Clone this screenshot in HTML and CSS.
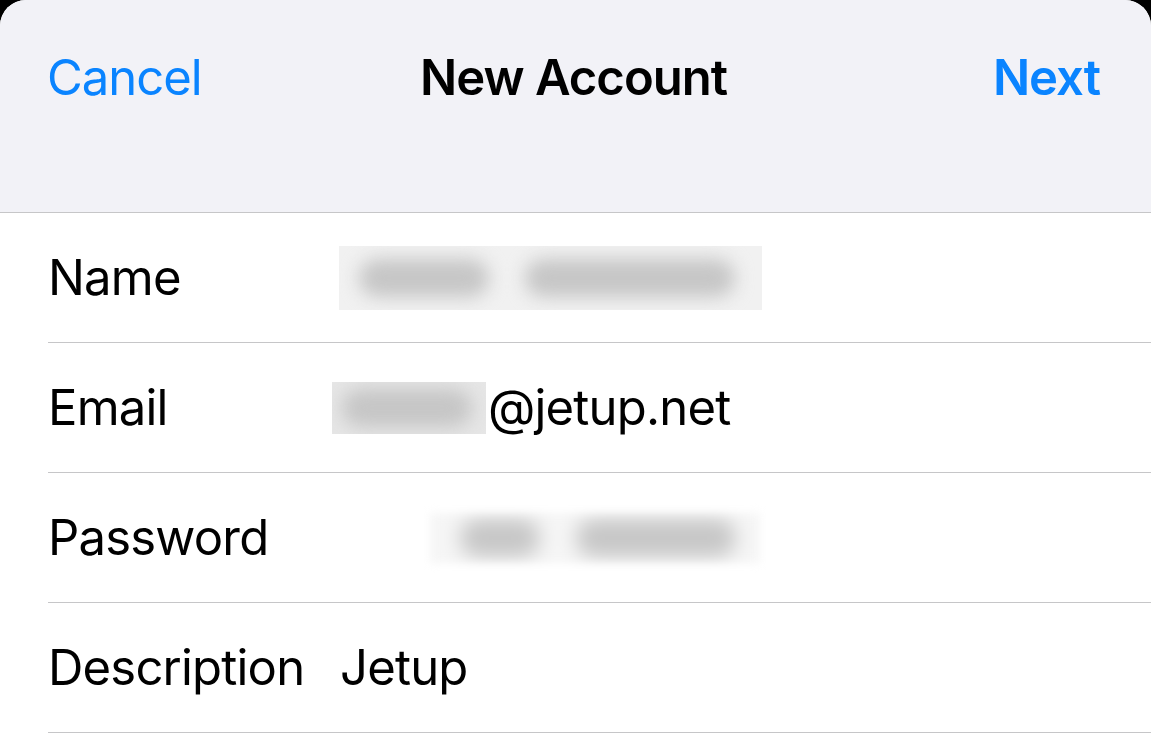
FILE: index.html
```html
<!DOCTYPE html>
<html lang="en">
<head>
    <meta charset="UTF-8">
    <meta name="viewport" content="width=device-width, initial-scale=1.0">
    <title>New Account</title>
    <link rel="stylesheet" href="styles.css">
</head>
<body>
    <div class="sheet">
        <div class="nav-bar">
            <button class="nav-btn cancel">Cancel</button>
            <div class="nav-title">New Account</div>
            <button class="nav-btn next">Next</button>
        </div>

        <div class="form-list">
            <div class="form-row">
                <span class="row-label">Name</span>
                <span class="row-value">
                    <span class="blur-box name-blur">
                        <span class="blob" style="width: 130px"></span>
                        <span class="blob" style="width: 210px"></span>
                    </span>
                </span>
            </div>
            <div class="form-row">
                <span class="row-label">Email</span>
                <span class="row-value">
                    <span class="blur-box email-blur">
                        <span class="blob" style="width: 130px"></span>
                    </span><span class="value-text">@jetup.net</span>
                </span>
            </div>
            <div class="form-row">
                <span class="row-label">Password</span>
                <span class="row-value">
                    <span class="blur-box pass-blur">
                        <span class="blob" style="width: 80px"></span>
                        <span class="blob" style="width: 160px"></span>
                    </span>
                </span>
            </div>
            <div class="form-row">
                <span class="row-label">Description</span>
                <span class="row-value"><span class="value-text">Jetup</span></span>
            </div>
        </div>
    </div>
</body>
</html>
```

FILE: styles.css
```css
* {
    margin: 0;
    padding: 0;
    box-sizing: border-box;
}

body {
    font-family: Inter, 'Noto Sans', sans-serif;
    background: #000;
    height: 100vh;
    overflow: hidden;
    color: #000;
}

.sheet {
    background: #fff;
    border-radius: 26px 26px 0 0;
    height: 100vh;
    overflow: hidden;
}

.nav-bar {
    background: #f2f2f7;
    height: 213px;
    border-bottom: 1px solid #c6c6c8;
    display: grid;
    grid-template-columns: 1fr auto 1fr;
    align-items: start;
    padding: 50px 51px 0 47px;
}

.nav-btn {
    background: none;
    border: none;
    color: #0a84ff;
    font-family: inherit;
    font-size: 49px;
    line-height: 56px;
    letter-spacing: -1px;
    cursor: pointer;
}

.nav-btn.cancel {
    justify-self: start;
}

.nav-btn.next {
    justify-self: end;
    font-weight: 600;
}

.nav-title {
    font-size: 49px;
    line-height: 56px;
    letter-spacing: -1px;
    font-weight: 600;
}

.form-list {
    padding-left: 48px;
}

.form-row {
    height: 130px;
    display: flex;
    align-items: center;
    border-bottom: 1px solid #c6c6c8;
}

.row-label {
    width: 292px;
    font-size: 49px;
    letter-spacing: -0.8px;
    flex-shrink: 0;
}

.row-value {
    display: flex;
    align-items: center;
    font-size: 49px;
    letter-spacing: -0.8px;
}

.blur-box {
    display: flex;
    align-items: center;
    gap: 36px;
    background: #f1f1f1;
    padding: 0 20px;
    overflow: hidden;
}

.name-blur {
    width: 423px;
    height: 64px;
    margin-left: -1px;
    padding-left: 20px;
}

.email-blur {
    width: 154px;
    height: 52px;
    margin-left: -8px;
    margin-right: 2px;
    padding-left: 10px;
    background: #e6e6e6;
}

.pass-blur {
    width: 330px;
    height: 50px;
    margin-left: 90px;
    background: #f6f6f6;
    padding-left: 30px;
    filter: blur(4px);
}

.blob {
    display: block;
    flex-shrink: 0;
    height: 38px;
    background: #c6c6c6;
    border-radius: 19px;
    filter: blur(9px);
}
```
